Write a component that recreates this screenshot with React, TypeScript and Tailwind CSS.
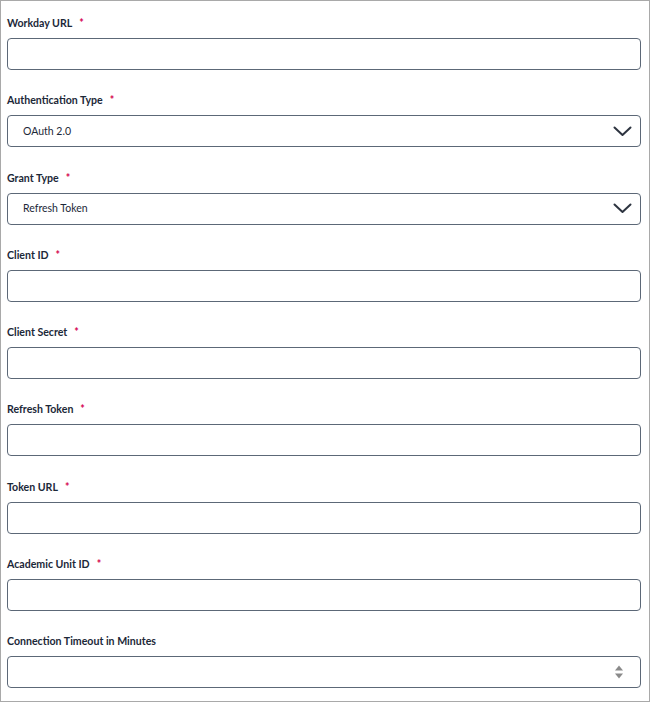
type Field = {
  label: string
  required?: boolean
  kind: 'text' | 'select' | 'number'
  value?: string
}

const fields: Field[] = [
  { label: 'Workday URL', required: true, kind: 'text' },
  { label: 'Authentication Type', required: true, kind: 'select', value: 'OAuth 2.0' },
  { label: 'Grant Type', required: true, kind: 'select', value: 'Refresh Token' },
  { label: 'Client ID', required: true, kind: 'text' },
  { label: 'Client Secret', required: true, kind: 'text' },
  { label: 'Refresh Token', required: true, kind: 'text' },
  { label: 'Token URL', required: true, kind: 'text' },
  { label: 'Academic Unit ID', required: true, kind: 'text' },
  { label: 'Connection Timeout in Minutes', kind: 'number' },
]

function Chevron() {
  return (
    <svg width="19" height="11" viewBox="0 0 19 11" fill="none" className="text-[#2d3440]">
      <polyline
        points="1.5,1.5 9.5,9 17.5,1.5"
        stroke="currentColor"
        strokeWidth="2"
        strokeLinecap="round"
        strokeLinejoin="round"
      />
    </svg>
  )
}

function Spinner() {
  return (
    <svg width="10" height="16" viewBox="0 0 10 16" className="text-[#8a8a8a]">
      <path d="M5 1.5 L9 6.5 H1 Z" fill="currentColor" />
      <path d="M5 14.5 L9 9.5 H1 Z" fill="currentColor" />
    </svg>
  )
}

function FormField({ f }: { f: Field }) {
  return (
    <div>
      <div className="flex h-[17px] items-center pt-[2px] text-[10.6px] font-bold leading-[15px] text-[#1c2838]">
        {f.label}
        {f.required ? <span className="ml-[7px] text-[#d4004c]">*</span> : null}
      </div>
      <div className="mt-[7px] flex h-8 items-center rounded-[4px] border border-[#5c6877] bg-white pl-[15px] pr-2 text-[10.5px] text-[#1c2838]">
        <span className="flex-1 pt-px">{f.value ?? ''}</span>
        {f.kind === 'select' ? <Chevron /> : null}
        {f.kind === 'number' ? (
          <div className="mr-[8px]">
            <Spinner />
          </div>
        ) : null}
      </div>
    </div>
  )
}

export default function App() {
  return (
    <div className="h-[703px] w-[650px] bg-white font-['Lato',sans-serif]">
      <div className="h-[702px] w-[650px] border border-[#a9a9a9] px-[6px] pt-[13px]">
        <div className="w-[634px] space-y-[21.3px]">
          {fields.map((f) => (
            <FormField key={f.label} f={f} />
          ))}
        </div>
      </div>
    </div>
  )
}
